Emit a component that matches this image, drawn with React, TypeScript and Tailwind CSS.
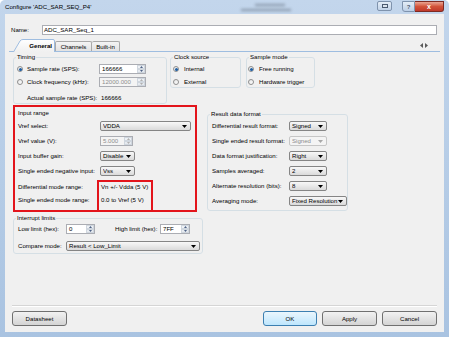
import type { ReactNode } from "react"

function Arrow({ className = "fill-black", up }: { className?: string; up?: boolean }) {
  return (
    <svg width="5" height="3" viewBox="0 0 5 3" className={`${className} shrink-0`}>
      <path d={up ? "M0 3h5L2.5 0z" : "M0 0h5L2.5 3z"} />
    </svg>
  )
}

function Combo({ className, value, disabled }: { className: string; value: string; disabled?: boolean }) {
  return (
    <div
      className={`${className} h-[10px] shrink-0 flex items-center rounded-[2px] border pl-[2px] pr-[3px] ${
        disabled
          ? "border-[#c6c6c6] bg-[#f4f4f4] text-[#8d8d8d]"
          : "border-[#858585] bg-linear-to-b from-[#f8f8f8] to-[#dadada]"
      }`}
    >
      <span className="flex-1 overflow-hidden whitespace-nowrap leading-[8px]">{value}</span>
      <Arrow className={disabled ? "fill-[#a8a8a8]" : "fill-black"} />
    </div>
  )
}

function Spin({ className, value, disabled }: { className: string; value: string; disabled?: boolean }) {
  return (
    <div
      className={`${className} h-[10px] shrink-0 flex border border-[#abadb3] ${
        disabled ? "bg-[#f4f4f4] text-[#8d8d8d]" : "bg-white"
      }`}
    >
      <span className="flex-1 pl-[2px] leading-[8px]">{value}</span>
      <div className="w-[8px] flex flex-col">
        <div className="h-[4px] flex items-center justify-center border border-[#cfd6de] bg-[#eef1f5]">
          <svg width="3" height="2" viewBox="0 0 3 2" className={disabled ? "fill-[#b0b0b0]" : "fill-[#4d6185]"}>
            <path d="M0 2h3L1.5 0z" />
          </svg>
        </div>
        <div className="h-[4px] flex items-center justify-center border border-[#cfd6de] bg-[#e6eaef]">
          <svg width="3" height="2" viewBox="0 0 3 2" className={disabled ? "fill-[#b0b0b0]" : "fill-[#4d6185]"}>
            <path d="M0 0h3L1.5 2z" />
          </svg>
        </div>
      </div>
    </div>
  )
}

function Radio({ checked }: { checked?: boolean }) {
  return (
    <span className="w-[6px] h-[6px] shrink-0 rounded-full border border-[#8f8f8f] bg-linear-to-br from-[#e6e6e6] to-[#ffffff] flex items-center justify-center">
      {checked && <span className="w-[3px] h-[3px] rounded-full bg-[#1f5fa3]" />}
    </span>
  )
}

function Group({ title, className, children }: { title: string; className: string; children?: ReactNode }) {
  return (
    <fieldset className={`${className} shrink-0 border border-[#d5dfe5] rounded-[3px]`}>
      <legend className="ml-[2px] px-[1px] leading-[8px]">{title}</legend>
      {children}
    </fieldset>
  )
}

function Row({ label, labelW, children, className }: { label: string; labelW: string; children?: ReactNode; className: string }) {
  return (
    <div className={`${className} h-[10px] flex items-center`}>
      <span className={`${labelW} shrink-0 leading-[8px]`}>{label}</span>
      {children}
    </div>
  )
}

function Btn({ children, className, primary }: { children: ReactNode; className: string; primary?: boolean }) {
  return (
    <div
      className={`${className} h-[15px] flex items-center justify-center rounded-[3px] border ${
        primary
          ? "border-[#3c7fb1] bg-linear-to-b from-[#eaf6fd] to-[#bee6fd]"
          : "border-[#707070] bg-linear-to-b from-[#f2f2f2] to-[#d4d4d4]"
      }`}
    >
      {children}
    </div>
  )
}

export default function App() {
  return (
    <div className="w-[449px] h-[337px] flex flex-col overflow-hidden rounded-t-[5px] bg-linear-to-b from-[#c3d6ec] to-[#a9c3e1] text-[6.1px] leading-[8px] text-black font-['Liberation_Sans',Arial,sans-serif]">
      {/* title bar */}
      <div className="h-[14px] shrink-0 flex items-center">
        <span className="ml-[5px]">Configure 'ADC_SAR_SEQ_P4'</span>
        <div className="ml-[150px] flex flex-col gap-[3px] opacity-50 blur-[1.5px]">
          <span className="w-[30px] h-[2px] ml-[14px] bg-[#4b5663]" />
          <span className="w-[50px] h-[2px] bg-[#4b5663]" />
        </div>
        <div className="ml-auto mr-[5px] self-start mt-[1px] flex items-start">
          <div className="w-[15px] h-[10px] mr-[10px] rounded-[2px] border border-[#7f93ad] bg-linear-to-b from-[#e4edf7] to-[#c2d3e8] flex items-center justify-center">
            <span className="w-[6px] h-[4px] border border-[#4a5a70] bg-[#dbe4ee]" />
          </div>
          <div className="w-[13px] h-[11px] rounded-bl-[3px] border border-[#7f93ad] bg-linear-to-b from-[#e4edf7] to-[#bccfe6] flex items-center justify-center text-[6px] font-bold text-[#4a5a70]">
            ?
          </div>
          <div className="w-[29px] h-[11px] rounded-br-[3px] border border-l-0 border-[#7e2a22] bg-linear-to-b from-[#e8a493] via-[#d2533a] to-[#c0392b] flex items-center justify-center text-[7px] font-bold text-white">
            x
          </div>
        </div>
      </div>

      {/* client area */}
      <div className="mx-[5px] h-[318px] shrink-0 flex flex-col bg-[#f0f0f0]">
        <div className="mt-[11px] h-[10px] flex items-center">
          <span className="ml-[6px] w-[31px]">Name:</span>
          <div className="w-[395px] h-[10px] border border-[#abadb3] bg-white pl-[1px] leading-[8px]">ADC_SAR_Seq_1</div>
        </div>

        {/* tab strip */}
        <div className="mt-[4px] h-[12px] flex items-end">
          <div className="ml-[8px] relative w-[42px] h-[13px] -mb-px flex items-center justify-end pr-[3px] pt-[1px] font-bold">
            <svg width="42" height="13" viewBox="0 0 42 13" className="absolute inset-0">
              <defs>
                <linearGradient id="tg" x1="0" y1="0" x2="0" y2="1">
                  <stop offset="0" stopColor="#ffffff" />
                  <stop offset="1" stopColor="#f0f0f0" />
                </linearGradient>
              </defs>
              <path d="M0.5 13 L7 2 Q8 0.5 10 0.5 H40 Q41.5 0.5 41.5 2 V13" fill="url(#tg)" stroke="#9ebde0" />
            </svg>
            <span className="relative">General</span>
          </div>
          <div className="w-[37px] h-[10px] flex items-center justify-center rounded-t-[2px] border border-b-0 border-[#a9a9a9] bg-linear-to-b from-[#f4f4f4] to-[#e2e2e2]">
            Channels
          </div>
          <div className="w-[28px] h-[10px] flex items-center justify-center rounded-t-[2px] border border-b-0 border-l-0 border-[#a9a9a9] bg-linear-to-b from-[#f4f4f4] to-[#e2e2e2]">
            Built-in
          </div>
          <div className="ml-auto mr-[16px] self-center flex gap-[2px]">
            <svg width="3" height="5" viewBox="0 0 3 5" className="fill-[#5a5a5a]">
              <path d="M3 0v5L0 2.5z" />
            </svg>
            <svg width="3" height="5" viewBox="0 0 3 5" className="fill-[#5a5a5a]">
              <path d="M0 0v5l3-2.5z" />
            </svg>
          </div>
        </div>

        {/* tab page */}
        <div className="mx-[4px] h-[254px] shrink-0 border-t border-[#9ebde0]">
          <div className="ml-[4px] mt-[1px] flex items-start">
            <Group title="Timing" className="w-[154px] h-[51px]">
              <div className="mt-[3px] h-[10px] flex items-center pl-[3px]">
                <Radio checked />
                <span className="ml-[4px] w-[72px]">Sample rate (SPS):</span>
                <Spin className="w-[47px]" value="166666" />
              </div>
              <div className="mt-[3px] h-[10px] flex items-center pl-[3px]">
                <Radio />
                <span className="ml-[4px] w-[72px]">Clock frequency (kHz):</span>
                <Spin className="w-[47px]" value="12000.000" disabled />
              </div>
              <div className="mt-[6px] h-[10px] flex items-center pl-[13px]">
                <span className="w-[74px]">Actual sample rate (SPS):</span>
                <span>166666</span>
              </div>
            </Group>
            <Group title="Clock source" className="ml-[3px] w-[71px] h-[35px]">
              <div className="mt-[3px] h-[10px] flex items-center pl-[2px]">
                <Radio checked />
                <span className="ml-[5px]">Internal</span>
              </div>
              <div className="mt-[3px] h-[10px] flex items-center pl-[2px]">
                <Radio />
                <span className="ml-[5px]">External</span>
              </div>
            </Group>
            <Group title="Sample mode" className="ml-[5px] w-[69px] h-[35px]">
              <div className="mt-[3px] h-[10px] flex items-center pl-[1px]">
                <Radio checked />
                <span className="ml-[5px]">Free running</span>
              </div>
              <div className="mt-[3px] h-[10px] flex items-center pl-[1px]">
                <Radio />
                <span className="ml-[5px]">Hardware trigger</span>
              </div>
            </Group>
          </div>

          <div className="ml-[4px] mt-[1px] flex items-start">
            <div className="w-[184px] h-[107px] shrink-0 border-2 border-[#e3141b]">
              <div className="mt-[2px] ml-[3px] leading-[8px]">Input range</div>
              <Row className="mt-[4px] pl-[3px]" labelW="w-[82px]" label="Vref select:">
                <Combo className="w-[91px]" value="VDDA" />
              </Row>
              <Row className="mt-[5px] pl-[3px]" labelW="w-[82px]" label="Vref value (V):">
                <Spin className="w-[33px]" value="5.000" disabled />
              </Row>
              <Row className="mt-[5px] pl-[3px]" labelW="w-[82px]" label="Input buffer gain:">
                <Combo className="w-[35px]" value="Disable" />
              </Row>
              <Row className="mt-[5px] pl-[3px]" labelW="w-[82px]" label="Single ended negative input:">
                <Combo className="w-[35px]" value="Vss" />
              </Row>
              <div className="mt-[4px] pl-[3px] flex">
                <div className="w-[79px] pt-[2px]">
                  <div className="h-[10px] flex items-center">Differential mode range:</div>
                  <div className="mt-[3px] h-[10px] flex items-center">Single ended mode range:</div>
                </div>
                <div className="w-[56px] h-[32px] border-2 border-[#e3141b] pl-[2px]">
                  <div className="h-[10px] flex items-center">Vn +/- Vdda (5 V)</div>
                  <div className="mt-[3px] h-[10px] flex items-center">0.0 to Vref (5 V)</div>
                </div>
              </div>
            </div>

            <Group title="Result data format" className="ml-[10px] mt-[5px] w-[141px] h-[101px]">
              <Row className="mt-[3px] pl-[4px]" labelW="w-[77px]" label="Differential result format:">
                <Combo className="w-[38px]" value="Signed" />
              </Row>
              <Row className="mt-[5px] pl-[4px]" labelW="w-[77px]" label="Single ended result format:">
                <Combo className="w-[38px]" value="Signed" disabled />
              </Row>
              <Row className="mt-[5px] pl-[4px]" labelW="w-[77px]" label="Data format justification:">
                <Combo className="w-[38px]" value="Right" />
              </Row>
              <Row className="mt-[5px] pl-[4px]" labelW="w-[77px]" label="Samples averaged:">
                <Combo className="w-[38px]" value="2" />
              </Row>
              <Row className="mt-[5px] pl-[4px]" labelW="w-[77px]" label="Alternate resolution (bits):">
                <Combo className="w-[38px]" value="8" />
              </Row>
              <Row className="mt-[5px] pl-[4px]" labelW="w-[77px]" label="Averaging mode:">
                <Combo className="w-[58px]" value="Fixed Resolution" />
              </Row>
            </Group>
          </div>

          <Group title="Interrupt limits" className="ml-[4px] mt-[2px] w-[190px] h-[40px]">
            <Row className="mt-[2px] pl-[4px]" labelW="w-[48px]" label="Low limit (hex):">
              <Spin className="w-[29px]" value="0" />
              <span className="ml-[20px] w-[45px] shrink-0">High limit (hex):</span>
              <Spin className="w-[30px]" value="7FF" />
            </Row>
            <Row className="mt-[7px] pl-[4px]" labelW="w-[48px]" label="Compare mode:">
              <Combo className="w-[134px]" value="Result < Low_Limit" />
            </Row>
          </Group>
        </div>

        <div className="mx-[7px] border-t border-b border-t-[#d5d5d5] border-b-white" />

        <div className="mt-[4px] flex">
          <Btn className="ml-[7px] w-[55px]">Datasheet</Btn>
          <Btn className="ml-auto w-[54px]" primary>
            OK
          </Btn>
          <Btn className="ml-[5px] w-[55px]">Apply</Btn>
          <Btn className="ml-[5px] mr-[7px] w-[55px]">Cancel</Btn>
        </div>
      </div>
    </div>
  )
}
